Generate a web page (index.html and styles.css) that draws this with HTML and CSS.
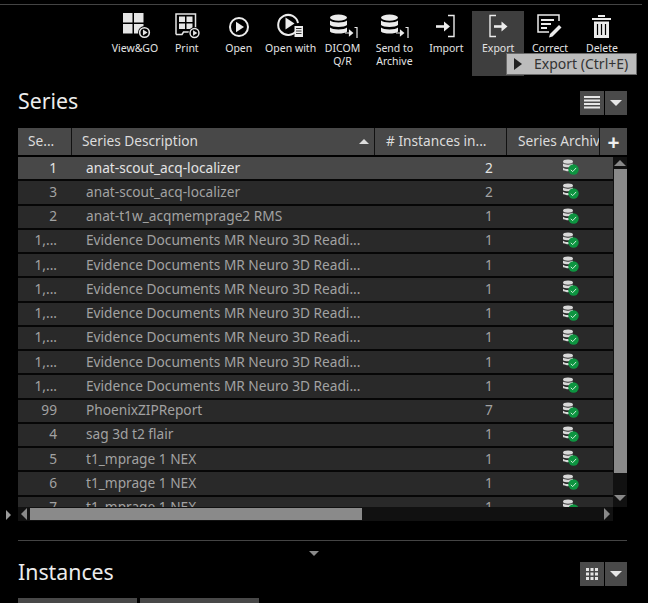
FILE: index.html
```html
<!DOCTYPE html>
<html lang="en">
<head>
<meta charset="utf-8">
<title>Series</title>
<link rel="stylesheet" href="styles.css">
</head>
<body>
<svg class="defs" width="0" height="0" aria-hidden="true">
  <symbol id="status" viewBox="0 0 18 16">
    <ellipse cx="6" cy="2.6" rx="5" ry="2.2" fill="#d8d8d8"/>
    <path d="M1 4.6c1.5 1.4 8.5 1.4 10 0v2.6c-1.5 1.4-8.500 1.400-10 0z" fill="#d8d8d8"/>
    <path d="M1 8.800c1.500 1.400 5 1.400 6 1v2.200c-2 .4-4.500.2-6-1z" fill="#d8d8d8"/>
    <circle cx="11.500" cy="10.500" r="5.200" fill="#0d9440"/>
    <path d="M8.800 10.800l1.900 1.800 3.500-3.700" fill="none" stroke="#cdeed8" stroke-width="1"/>
  </symbol>
  <symbol id="play" viewBox="0 0 14 14">
    <circle cx="7" cy="7" r="7" fill="#000"/>
    <circle cx="7" cy="7" r="5.200" fill="none" stroke="#e6e6e6" stroke-width="1.700"/>
    <path d="M5.300 3.800l5 3.200-5 3.200z" fill="#e6e6e6"/>
  </symbol>
  <symbol id="db" viewBox="0 0 30 24">
    <ellipse cx="9.500" cy="3.600" rx="8.500" ry="3.100" fill="#ececec"/>
    <path d="M1 6.500c2 2.600 15 2.600 17 0v4.500c-2 2.600-15 2.600-17 0z" fill="#ececec"/>
    <path d="M1 13.500c2 2.600 15 2.600 17 0v4c-2 2.800-15 2.800-17 0z" fill="#ececec"/>
    <path d="M16 19h7M20.500 16.500l3 2.500-3 2.500z" fill="#ececec" stroke="#ececec" stroke-width="1.200"/>
    <path d="M25.500 13.500h2.500v11h-2.500" fill="none" stroke="#ececec" stroke-width="1.200"/>
  </symbol>
  <symbol id="tri-down" viewBox="0 0 12 6">
    <path d="M0 0h12L6 6z" fill="#e6e6e6"/>
  </symbol>
</svg>

<div class="top-line"></div>

<nav class="toolbar">
  <div class="tool">
    <svg class="ico" width="34" height="28" viewBox="0 0 34 28">
      <path d="M5 2h9.500v9.500H5zM16 2h9.500v9.500H16zM5 13h9.500v9.500H5zM16 13h9.500v5l-4 4.500H16z" fill="#e6e6e6"/>
      <use href="#play" x="20" y="15" width="13" height="13"/>
    </svg>
    <span class="tool-label">View&amp;GO</span>
  </div>
  <div class="tool">
    <svg class="ico" width="34" height="28" viewBox="0 0 34 28">
      <path d="M6 23.500V3h19.500v18M6 23.500h6l1.500-2.500h6" fill="none" stroke="#e6e6e6" stroke-width="1.500"/>
      <path d="M9 5.500h6v5.500H9zM16.500 5.500h6v5.500h-6zM9 12.500h6v5.500H9zM16.500 12.500h6v5.500h-6z" fill="#e6e6e6"/>
      <use href="#play" x="18" y="16" width="13" height="12"/>
    </svg>
    <span class="tool-label">Print</span>
  </div>
  <div class="tool">
    <svg class="ico" width="34" height="28" viewBox="0 0 34 28">
      <circle cx="17" cy="16" r="9" fill="none" stroke="#ececec" stroke-width="2"/>
      <path d="M14 10.800l8 5.200-8 5.200z" fill="#ececec"/>
    </svg>
    <span class="tool-label">Open</span>
  </div>
  <div class="tool">
    <svg class="ico" width="34" height="28" viewBox="0 0 34 28">
      <path d="M22.500 19.500A10 10 0 1 1 24 12" fill="none" stroke="#ececec" stroke-width="2"/>
      <path d="M11.500 6.500l9 6-9 6z" fill="#ececec"/>
      <path d="M20.500 15h8.500v11h-8.500z" fill="#ececec"/>
      <path d="M22 17.500h5.500M22 20h5.500M22 22.500h5.500" stroke="#333" stroke-width="1"/>
    </svg>
    <span class="tool-label">Open with</span>
  </div>
  <div class="tool">
    <svg class="ico" width="34" height="28" viewBox="0 0 34 28"><use href="#db" x="3" y="3" width="30" height="24"/></svg>
    <span class="tool-label">DICOM<br>Q/R</span>
  </div>
  <div class="tool">
    <svg class="ico" width="34" height="28" viewBox="0 0 34 28"><use href="#db" x="3" y="3" width="30" height="24"/></svg>
    <span class="tool-label">Send to<br>Archive</span>
  </div>
  <div class="tool">
    <svg class="ico" width="34" height="28" viewBox="0 0 34 28">
      <path d="M7 15.500h9" stroke="#ececec" stroke-width="2.600"/>
      <path d="M15 10.500l6 5-6 5z" fill="#ececec"/>
      <path d="M19 4.500h6v21h-6" fill="none" stroke="#ececec" stroke-width="1.400"/>
    </svg>
    <span class="tool-label">Import</span>
  </div>
  <div class="tool tool-active">
    <svg class="ico" width="34" height="28" viewBox="0 0 34 28">
      <path d="M15 4.500H9v21h6" fill="none" stroke="#ececec" stroke-width="1.400"/>
      <path d="M13 15.500h9" stroke="#ececec" stroke-width="2.600"/>
      <path d="M20.500 10.500l6 5-6 5z" fill="#ececec"/>
    </svg>
    <span class="tool-label">Export</span>
  </div>
  <div class="tool">
    <svg class="ico" width="34" height="28" viewBox="0 0 34 28">
      <path d="M26 10V4H5v17h11" fill="none" stroke="#ececec" stroke-width="1.500"/>
      <path d="M8 8h13v2H8zM8 12h10v2H8zM8 16h6v2H8z" fill="#ececec"/>
      <path d="M17 23l9-9 2.500 2.500-9 9-3.500 1z" fill="#ececec"/>
    </svg>
    <span class="tool-label">Correct</span>
  </div>
  <div class="tool">
    <svg class="ico" width="34" height="28" viewBox="0 0 34 28">
      <path d="M7 7h19v2H7zM13 4h7v2h-7z" fill="#ececec"/>
      <path d="M9 10.500h15V27H9z" fill="#ececec"/>
      <path d="M12.500 13v11M16.500 13v11M20.500 13v11" stroke="#000" stroke-width="1.200"/>
    </svg>
    <span class="tool-label">Delete</span>
  </div>
</nav>

<div class="tooltip"><span class="tooltip-arrow"></span><span>Export (Ctrl+E)</span></div>

<main class="panel">
  <header class="section-head series-head">
    <h2 class="section-title">Series</h2>
    <div class="view-btns">
      <button class="vbtn vbtn-main" type="button" aria-label="List view">
        <svg width="16" height="14" viewBox="0 0 16 14"><path d="M0 1h16M0 4.500h16M0 8h16M0 11.500h16" stroke="#e6e6e6" stroke-width="2"/></svg>
      </button>
      <button class="vbtn vbtn-menu" type="button" aria-label="Menu">
        <svg width="12" height="6"><use href="#tri-down"/></svg>
      </button>
    </div>
  </header>

  <div class="table">
    <div class="thead">
      <div class="th">Se...</div>
      <div class="th">Series Description<span class="sort-up"></span></div>
      <div class="th th-clip"># Instances in...</div>
      <div class="th th-clip">Series Archiv</div>
      <div class="th th-plus">+</div>
    </div>
    <div class="tbody">
      <div class="rows">
        <div class="row row-selected"><span class="c-num">1</span><span class="c-desc">anat-scout_acq-localizer</span><span class="c-count">2</span><span class="c-arch"><svg width="18" height="16"><use href="#status"/></svg></span></div>
        <div class="row"><span class="c-num">3</span><span class="c-desc">anat-scout_acq-localizer</span><span class="c-count">2</span><span class="c-arch"><svg width="18" height="16"><use href="#status"/></svg></span></div>
        <div class="row"><span class="c-num">2</span><span class="c-desc">anat-t1w_acqmemprage2 RMS</span><span class="c-count">1</span><span class="c-arch"><svg width="18" height="16"><use href="#status"/></svg></span></div>
        <div class="row"><span class="c-num">1,...</span><span class="c-desc">Evidence Documents MR Neuro 3D Readi...</span><span class="c-count">1</span><span class="c-arch"><svg width="18" height="16"><use href="#status"/></svg></span></div>
        <div class="row"><span class="c-num">1,...</span><span class="c-desc">Evidence Documents MR Neuro 3D Readi...</span><span class="c-count">1</span><span class="c-arch"><svg width="18" height="16"><use href="#status"/></svg></span></div>
        <div class="row"><span class="c-num">1,...</span><span class="c-desc">Evidence Documents MR Neuro 3D Readi...</span><span class="c-count">1</span><span class="c-arch"><svg width="18" height="16"><use href="#status"/></svg></span></div>
        <div class="row"><span class="c-num">1,...</span><span class="c-desc">Evidence Documents MR Neuro 3D Readi...</span><span class="c-count">1</span><span class="c-arch"><svg width="18" height="16"><use href="#status"/></svg></span></div>
        <div class="row"><span class="c-num">1,...</span><span class="c-desc">Evidence Documents MR Neuro 3D Readi...</span><span class="c-count">1</span><span class="c-arch"><svg width="18" height="16"><use href="#status"/></svg></span></div>
        <div class="row"><span class="c-num">1,...</span><span class="c-desc">Evidence Documents MR Neuro 3D Readi...</span><span class="c-count">1</span><span class="c-arch"><svg width="18" height="16"><use href="#status"/></svg></span></div>
        <div class="row"><span class="c-num">1,...</span><span class="c-desc">Evidence Documents MR Neuro 3D Readi...</span><span class="c-count">1</span><span class="c-arch"><svg width="18" height="16"><use href="#status"/></svg></span></div>
        <div class="row"><span class="c-num">99</span><span class="c-desc">PhoenixZIPReport</span><span class="c-count">7</span><span class="c-arch"><svg width="18" height="16"><use href="#status"/></svg></span></div>
        <div class="row"><span class="c-num">4</span><span class="c-desc">sag 3d t2 flair</span><span class="c-count">1</span><span class="c-arch"><svg width="18" height="16"><use href="#status"/></svg></span></div>
        <div class="row"><span class="c-num">5</span><span class="c-desc">t1_mprage 1 NEX</span><span class="c-count">1</span><span class="c-arch"><svg width="18" height="16"><use href="#status"/></svg></span></div>
        <div class="row"><span class="c-num">6</span><span class="c-desc">t1_mprage 1 NEX</span><span class="c-count">1</span><span class="c-arch"><svg width="18" height="16"><use href="#status"/></svg></span></div>
        <div class="row"><span class="c-num">7</span><span class="c-desc">t1_mprage 1 NEX</span><span class="c-count">1</span><span class="c-arch"><svg width="18" height="16"><use href="#status"/></svg></span></div>
      </div>
      <div class="vscroll">
        <span class="arrow-up"></span>
        <span class="vthumb"></span>
        <span class="arrow-down"></span>
      </div>
    </div>
    <div class="hbar">
      <span class="expand-arrow"></span>
      <div class="hscroll">
        <span class="arrow-left"></span>
        <span class="hthumb"></span>
        <span class="arrow-right"></span>
      </div>
    </div>
  </div>

  <div class="divider"></div>
  <div class="collapse"><svg width="10" height="5"><use href="#tri-down" width="10" height="5"/></svg></div>

  <header class="section-head instances-head">
    <h2 class="section-title">Instances</h2>
    <div class="view-btns">
      <button class="vbtn vbtn-main" type="button" aria-label="Grid view">
        <svg width="12" height="12" viewBox="0 0 12 12"><path d="M0 0h3v3H0zM4.500 0h3v3h-3zM9 0h3v3H9zM0 4.500h3v3H0zM4.500 4.500h3v3h-3zM9 4.500h3v3H9zM0 9h3v3H0zM4.500 9h3v3h-3zM9 9h3v3H9z" fill="#e6e6e6"/></svg>
      </button>
      <button class="vbtn vbtn-menu" type="button" aria-label="Menu">
        <svg width="12" height="6"><use href="#tri-down"/></svg>
      </button>
    </div>
  </header>

  <div class="tabs"><span class="tab"></span><span class="tab"></span></div>
</main>
</body>
</html>
```

FILE: styles.css
```css
* { box-sizing: border-box; }

html, body {
  margin: 0;
  height: 603px;
  overflow: hidden;
  background: #000;
}

body {
  position: relative;
  font-family: "Noto Sans", "Open Sans", sans-serif;
  color: #e0e0e0;
}

.defs { position: absolute; }

.top-line {
  width: 642px;
  height: 1px;
  margin-top: 4px;
  background: #444;
}

.toolbar {
  display: flex;
  height: 65px;
  margin: 6px 0 0 109px;
}

.tool {
  width: 51.900px;
  display: flex;
  flex-direction: column;
  align-items: center;
  flex: none;
}

.tool-active { background: #3e3e3e; }

.ico { display: block; flex: none; }

.tool-label {
  margin-top: 3px;
  font-size: 10.500px;
  line-height: 12.500px;
  text-align: center;
  color: #e4e4e4;
  white-space: nowrap;
}

.tooltip {
  position: absolute;
  left: 506px;
  top: 53px;
  width: 131px;
  height: 22px;
  display: flex;
  align-items: center;
  gap: 12px;
  padding: 0 0 2px 7px;
  background: #bcbcbc;
  border: 1px solid #6a6a6a;
  color: #333;
  font-size: 14px;
  white-space: nowrap;
}

.tooltip-arrow {
  width: 0;
  height: 0;
  margin-top: 2px;
  border-style: solid;
  border-width: 6.500px 0 6.500px 8px;
  border-color: transparent transparent transparent #222;
}

.panel {
  width: 609px;
  margin: 15px 0 0 18px;
}

.section-head {
  display: flex;
  align-items: flex-start;
  justify-content: space-between;
}

.section-title {
  margin: -2px 0 0;
  font-size: 21.300px;
  font-weight: 400;
  line-height: 24px;
  color: #ececec;
}

.view-btns { display: flex; gap: 1px; }

.vbtn {
  display: flex;
  align-items: center;
  justify-content: center;
  height: 24px;
  padding: 0;
  border: 0;
  background: #4a4a4a;
}

.vbtn-main { width: 24px; }
.vbtn-menu { width: 22px; }

.table { margin-top: 13px; }

.thead {
  display: grid;
  grid-template-columns: 54px 303px 132px 93px 27px;
  height: 27px;
  background: #484848;
}

.th {
  position: relative;
  display: flex;
  align-items: center;
  padding: 0 0 2px 10px;
  font-size: 13.700px;
  color: #dcdcdc;
  border-right: 1px solid #111;
  white-space: nowrap;
  overflow: hidden;
}

.th-clip { padding-left: 11px; }

.th-plus {
  justify-content: center;
  padding: 0;
  border-right: 0;
  font-size: 21px;
  font-weight: 700;
  color: #eee;
}

.sort-up {
  position: absolute;
  right: 5px;
  top: 11px;
  border-style: solid;
  border-width: 0 5px 5px;
  border-color: transparent transparent #ddd;
}

.tbody {
  display: flex;
  height: 350px;
  margin-top: 2px;
  overflow: hidden;
}

.rows { width: 595px; flex: none; }

.row {
  display: grid;
  grid-template-columns: 54px 303px 132px 1fr;
  align-items: center;
  height: 24.250px;
  padding-bottom: 2px;
  background: #292929;
  border-bottom: 2px solid #060606;
  background-clip: padding-box;
  color: #a2a2a2;
  font-size: 13.700px;
  white-space: nowrap;
}

.row-selected {
  background-color: #484848;
  color: #e4e4e4;
}

.c-num { padding-right: 15px; text-align: right; }
.c-desc { padding-left: 14px; }
.c-count { padding-left: 110px; }
.c-arch { display: flex; padding-left: 55px; }

.vscroll {
  position: relative;
  width: 14px;
  background: #111;
}

.arrow-up,
.arrow-down {
  position: absolute;
  left: 1px;
  width: 0;
  height: 0;
  border-style: solid;
}

.arrow-up {
  top: 3px;
  border-width: 0 6px 6px;
  border-color: transparent transparent #888;
}

.arrow-down {
  bottom: 6px;
  border-width: 6px 6px 0;
  border-color: #888 transparent transparent;
}

.vthumb {
  position: absolute;
  left: 1px;
  top: 12px;
  width: 13px;
  height: 304px;
  background: #8a8a8a;
}

.hbar {
  position: relative;
  height: 14px;
  width: 595px;
}

.expand-arrow {
  position: absolute;
  left: -12px;
  top: 3px;
  border-style: solid;
  border-width: 5px 0 5px 5px;
  border-color: transparent transparent transparent #9a9a9a;
}

.hscroll {
  position: relative;
  height: 14px;
  background: #111;
}

.arrow-left,
.arrow-right {
  position: absolute;
  top: 1px;
  width: 0;
  height: 0;
  border-style: solid;
}

.arrow-left {
  left: 3px;
  border-width: 6px 6px 6px 0;
  border-color: transparent #888 transparent transparent;
}

.arrow-right {
  right: 3px;
  border-width: 6px 0 6px 6px;
  border-color: transparent transparent transparent #888;
}

.hthumb {
  position: absolute;
  left: 12px;
  top: 1px;
  width: 332px;
  height: 12px;
  background: #8a8a8a;
}

.divider {
  height: 1px;
  margin-top: 19px;
  background: #444;
}

.collapse {
  display: flex;
  justify-content: center;
  height: 5px;
  margin-top: 10px;
  padding-right: 17px;
}

.collapse svg { display: block; opacity: .6; }

.instances-head { margin-top: 6px; }

.tabs {
  display: flex;
  gap: 3px;
  margin-top: 12px;
}

.tab {
  width: 119px;
  height: 6px;
  background: #484848;
}
```
